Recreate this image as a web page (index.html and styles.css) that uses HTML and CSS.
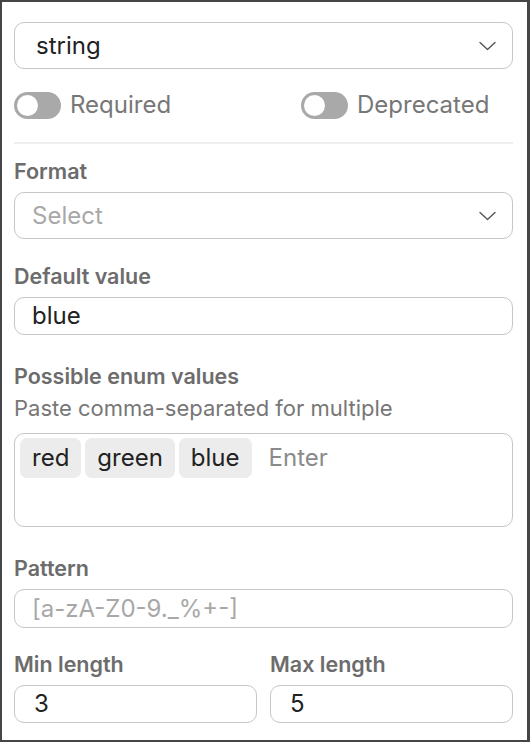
FILE: index.html
```html
<!DOCTYPE html>
<html>
<head>
<meta charset="utf-8">
<link rel="stylesheet" href="styles.css">
</head>
<body>
<div class="panel">
  <div class="select select-type">
    <span class="value">string</span>
    <svg class="chev" width="17" height="10" viewBox="0 0 17 10"><path d="M1 1.5 L8.5 8.5 L16 1.5" fill="none" stroke="#555" stroke-width="1.4" stroke-linecap="round" stroke-linejoin="round"/></svg>
  </div>

  <div class="toggles">
    <div class="toggle-item"><span class="switch"><span class="knob"></span></span><span class="tlabel">Required</span></div>
    <div class="toggle-item"><span class="switch"><span class="knob"></span></span><span class="tlabel">Deprecated</span></div>
  </div>

  <div class="divider"></div>

  <div class="field f-format">
    <div class="label">Format</div>
    <div class="select select-format">
      <span class="placeholder">Select</span>
      <svg class="chev" width="17" height="10" viewBox="0 0 17 10"><path d="M1 1.5 L8.5 8.5 L16 1.5" fill="none" stroke="#555" stroke-width="1.4" stroke-linecap="round" stroke-linejoin="round"/></svg>
    </div>
  </div>

  <div class="field f-default">
    <div class="label">Default value</div>
    <div class="input"><span class="value">blue</span></div>
  </div>

  <div class="field f-enum">
    <div class="label">Possible enum values</div>
    <div class="help">Paste comma-separated for multiple</div>
    <div class="tagbox">
      <span class="chip">red</span>
      <span class="chip">green</span>
      <span class="chip">blue</span>
      <span class="enter">Enter</span>
    </div>
  </div>

  <div class="field f-pattern">
    <div class="label">Pattern</div>
    <div class="input"><span class="placeholder">[a-zA-Z0-9._%+-]</span></div>
  </div>

  <div class="row f-length">
    <div class="field col">
      <div class="label">Min length</div>
      <div class="input small"><span class="value">3</span></div>
    </div>
    <div class="field col">
      <div class="label">Max length</div>
      <div class="input small"><span class="value">5</span></div>
    </div>
  </div>
</div>
</body>
</html>
```

FILE: styles.css
```css
* { box-sizing: border-box; }
html, body { margin: 0; padding: 0; background: #fff; }
body {
  width: 530px;
  height: 742px;
  font-family: Inter, "Noto Sans", "Liberation Sans", sans-serif;
  color: #222;
  overflow: hidden;
}
.panel {
  width: 530px;
  height: 742px;
  border: 2px solid #454545;
  border-right-width: 3px;
  padding: 20px 14px 0 12px;
  display: flex;
  flex-direction: column;
}
.select {
  display: flex;
  align-items: center;
  justify-content: space-between;
  border: 1.5px solid #c6c6c6;
  border-radius: 10px;
  font-size: 24px;
  line-height: 28px;
}
.select-type { height: 47px; padding: 0 16px 0 21px; }
.select-format { height: 47px; padding: 0 16px 0 17px; }
.chev { display: block; }
.value { color: #222; }
.placeholder { color: #a8a8a8; }

.toggles {
  margin-top: 22px;
  display: grid;
  grid-template-columns: 287px 1fr;
  height: 28px;
  align-items: center;
}
.toggle-item { display: flex; align-items: center; gap: 9px; }
.switch {
  width: 47px;
  height: 27px;
  border-radius: 14px;
  background: #a9a9a9;
  display: flex;
  align-items: center;
  padding-left: 3px;
}
.knob {
  width: 21px;
  height: 21px;
  border-radius: 50%;
  background: #fff;
}
.tlabel { font-size: 24px; line-height: 28px; color: #777; }

.divider {
  margin-top: 23px;
  height: 2px;
  background: #eeeeee;
}

.field { display: flex; flex-direction: column; }
.label {
  font-size: 21.5px;
  font-weight: 600;
  line-height: 26px;
  color: #6c6c6c;
  margin-bottom: 8px;
}
.f-format { margin-top: 14px; }
.f-default { margin-top: 24px; }
.f-enum { margin-top: 28px; }
.f-pattern { margin-top: 28px; }
.f-length { margin-top: 23px; }

.input {
  height: 38px;
  border: 1.5px solid #c6c6c6;
  border-radius: 10px;
  display: flex;
  align-items: center;
  padding: 0 17px;
  font-size: 24px;
  line-height: 28px;
}
.f-pattern .input { height: 39px; }
.input.small { height: 38px; padding-left: 19px; }

.f-enum .label { margin-bottom: 6px; }
.help {
  font-size: 22px;
  line-height: 26px;
  color: #777;
  margin-bottom: 12px;
}
.tagbox {
  height: 94px;
  border: 1.5px solid #c6c6c6;
  border-radius: 10px;
  padding: 4px 5px;
  display: flex;
  align-items: flex-start;
  gap: 4px;
  font-size: 24px;
  line-height: 28px;
}
.chip {
  height: 40px;
  background: #ececec;
  border-radius: 7px;
  padding: 0 12px;
  display: flex;
  align-items: center;
  color: #222;
}
.enter {
  height: 40px;
  display: flex;
  align-items: center;
  padding-left: 13px;
  color: #8a8a8a;
}

.row {
  display: grid;
  grid-template-columns: 1fr 1fr;
  column-gap: 13px;
}
```
